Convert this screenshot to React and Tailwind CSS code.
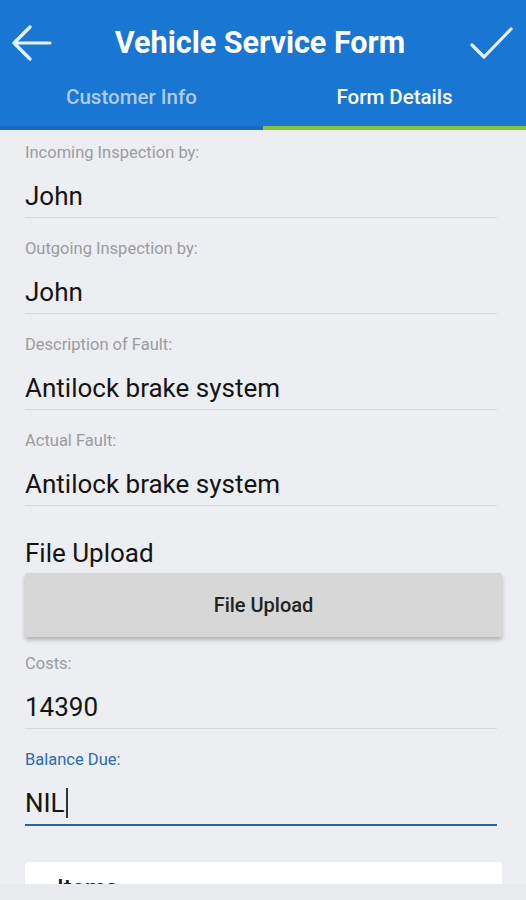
import React from "react";

const fields = [
  { label: "Incoming Inspection by:", value: "John" },
  { label: "Outgoing Inspection by:", value: "John" },
  { label: "Description of Fault:", value: "Antilock brake system" },
  { label: "Actual Fault:", value: "Antilock brake system" },
];

function Field({ label, value, active, first }) {
  return (
    <div className={first ? "mr-[5px]" : "mt-[22px] mr-[5px]"}>
      <div
        className={
          "h-[18px] leading-[18px] text-[16.5px] " +
          (active ? "text-[#2b6ca8]" : "text-[#9c9c9e]")
        }
      >
        {label}
      </div>
      <div
        className={
          "mt-[18px] pb-[5px] " +
          (active ? "border-b-2 border-[#1f68a6]" : "border-b border-[#d9dadd]")
        }
      >
        <div className="h-[32px] leading-[32px] text-[26px] text-[#141414] flex items-center">
          {value}
          {active && <span className="ml-[1px] inline-block w-[2px] h-[30px] bg-[#333]" />}
        </div>
      </div>
    </div>
  );
}

export default function App() {
  return (
    <div
      className="w-[526px] h-[900px] flex flex-col bg-[#eceef1] overflow-hidden"
      style={{ fontFamily: "Roboto, 'Noto Sans', sans-serif" }}
    >
      <div className="h-[884px] overflow-hidden flex flex-col">
        <div className="bg-[#1976d2] shrink-0">
          <div className="h-[86px] flex items-center justify-between px-[12px]">
            <svg width="40" height="36" viewBox="0 0 40 36" fill="none" className="text-white/90">
              <path
                d="M2 18 H38 M2 18 L18 2 M2 18 L18 34"
                stroke="currentColor"
                strokeWidth="3.2"
                strokeLinecap="round"
                strokeLinejoin="round"
              />
            </svg>
            <h1 className="text-[30.5px] font-bold text-white">
              Vehicle Service Form
            </h1>
            <svg width="46" height="36" viewBox="0 0 46 36" fill="none" className="text-white/90">
              <path
                d="M4 20 L16 32 L43 4"
                stroke="currentColor"
                strokeWidth="3.2"
                strokeLinecap="round"
                strokeLinejoin="round"
              />
            </svg>
          </div>
          <div className="flex h-[44px]">
            <div className="flex-1 border-b-4 border-[#1769c4] text-center text-[20.5px] font-medium leading-[22px] text-[#aecdee]">
              Customer Info
            </div>
            <div className="flex-1 border-b-4 border-[#86c232] text-center text-[20.5px] font-medium leading-[22px] text-white">
              Form Details
            </div>
          </div>
        </div>

        <div className="pl-[25px] pr-[24px] pt-[14px]">
          {fields.map((f, i) => (
            <Field key={i} label={f.label} value={f.value} first={i === 0} />
          ))}

          <div className="mt-[31px] h-[32px] leading-[32px] text-[26px] text-[#141414]">
            File Upload
          </div>
          <button className="mt-[4px] w-full h-[64px] bg-[#d7d7d7] rounded-[2px] shadow-[0_3px_4px_rgba(0,0,0,0.25)] text-[20px] font-medium text-[#222]">
            File Upload
          </button>

          <div className="mt-[18px]">
            <Field label="Costs:" value="14390" first />
            <Field label="Balance Due:" value="NIL" active />
          </div>

          <div className="mt-[36px] bg-white rounded-[3px] h-[60px] pl-[32px] pt-[12px]">
            <div className="text-[24px] leading-[28px] font-medium text-[#222]">Items</div>
          </div>
        </div>
      </div>
      <div className="h-[16px] bg-[#e9eaed]" />
    </div>
  );
}
